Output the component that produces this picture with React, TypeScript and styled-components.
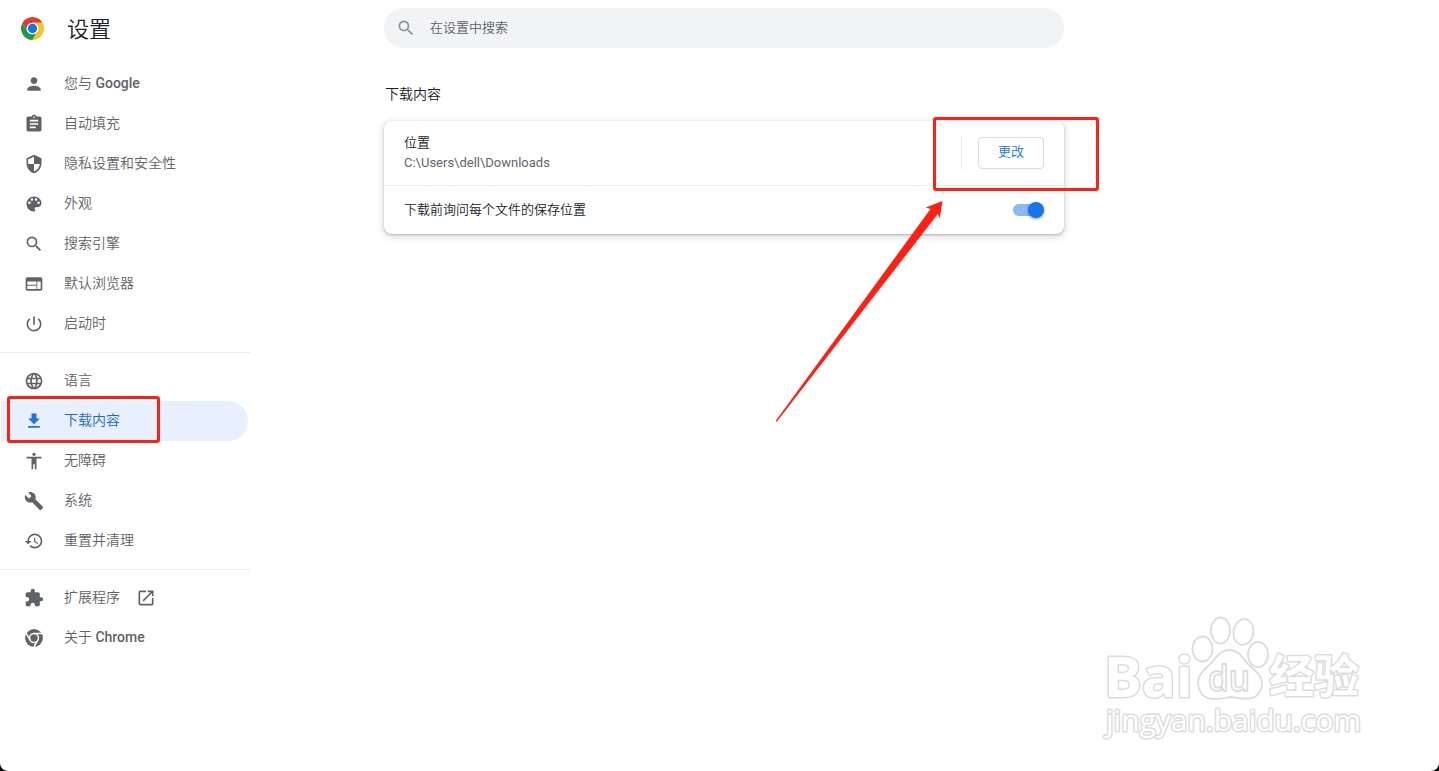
import type { ReactNode } from "react";
import styled, { createGlobalStyle } from "styled-components";
import {
  MdAccessibility,
  MdAssignment,
  MdBuild,
  MdExtension,
  MdHistory,
  MdLanguage,
  MdOpenInNew,
  MdPerson,
  MdPowerSettingsNew,
  MdSearch,
  MdSecurity,
  MdWeb,
} from "react-icons/md";

type MenuEntry = {
  label: ReactNode;
  icon: ReactNode;
  active?: boolean;
  external?: boolean;
};

const PaletteIcon = () => (
  <svg viewBox="0 0 24 24" fill="currentColor">
    <path d="M12 3c-4.97 0-9 4.03-9 9s4.03 9 9 9c.83 0 1.5-.67 1.5-1.5 0-.39-.15-.74-.39-1.01-.23-.26-.38-.61-.38-.99 0-.83.67-1.5 1.5-1.5H16c2.76 0 5-2.24 5-5 0-4.42-4.03-8-9-8zm-5.5 9c-.83 0-1.5-.67-1.5-1.5S5.67 9 6.5 9 8 9.67 8 10.5 7.33 12 6.5 12zm3-4C8.67 8 8 7.33 8 6.5S8.67 5 9.5 5s1.5.67 1.5 1.5S10.33 8 9.5 8zm5 0c-.83 0-1.5-.67-1.5-1.5S13.67 5 14.5 5s1.5.67 1.5 1.5S15.33 8 14.5 8zm3 4c-.83 0-1.5-.67-1.5-1.5S16.67 9 17.5 9s1.5.67 1.5 1.5-.67 1.5-1.5 1.5z" />
  </svg>
);

const DownloadIcon = () => (
  <svg viewBox="0 0 24 24" fill="currentColor">
    <path d="M19 9h-4V3H9v6H5l7 7 7-7zM5 18v2h14v-2H5z" />
  </svg>
);

const ChromeIcon = () => (
  <svg viewBox="-27 -27 54 54">
    <circle r="24" fill="#5f6368" />
    <circle r="12" fill="none" stroke="#fff" strokeWidth="4" />
    <g stroke="#fff" strokeWidth="4">
      <path d="M0-12H24" />
      <path d="M0-12H24" transform="rotate(120)" />
      <path d="M0-12H24" transform="rotate(240)" />
    </g>
  </svg>
);

const ChromeLogo = () => (
  <svg width="23" height="23" viewBox="0 0 48 48">
    <path fill="#e33b2e" d="M44.78 12A24 24 0 0 0 3.22 12L13.6 30A12 12 0 0 1 24 12Z" />
    <path fill="#219a48" d="M3.22 12A24 24 0 0 0 24 48L34.4 30A12 12 0 0 1 13.6 30Z" />
    <path fill="#fcc31e" d="M24 48A24 24 0 0 0 44.78 12H24A12 12 0 0 1 34.4 30Z" />
    <circle cx="24" cy="24" r="12" fill="#fff" />
    <circle cx="24" cy="24" r="9.7" fill="#1a73e8" />
  </svg>
);

const groups: MenuEntry[][] = [
  [
    { label: <>您与 <b>Google</b></>, icon: <MdPerson /> },
    { label: "自动填充", icon: <MdAssignment /> },
    { label: "隐私设置和安全性", icon: <MdSecurity /> },
    { label: "外观", icon: <PaletteIcon /> },
    { label: "搜索引擎", icon: <MdSearch /> },
    { label: "默认浏览器", icon: <MdWeb /> },
    { label: "启动时", icon: <MdPowerSettingsNew /> },
  ],
  [
    { label: "语言", icon: <MdLanguage /> },
    { label: "下载内容", icon: <DownloadIcon />, active: true },
    { label: "无障碍", icon: <MdAccessibility /> },
    { label: "系统", icon: <MdBuild /> },
    { label: "重置并清理", icon: <MdHistory /> },
  ],
  [
    { label: "扩展程序", icon: <MdExtension />, external: true },
    { label: <>关于 <b>Chrome</b></>, icon: <ChromeIcon /> },
  ],
];

function App() {
  return (
    <>
      <GlobalStyle />
      <StyledWindow>
        <StyledSidebar>
          <StyledBrand>
            <ChromeLogo />
            <h1>设置</h1>
          </StyledBrand>
          {groups.map((group, i) => (
            <StyledGroup key={i}>
              {group.map((entry, j) => (
                <StyledItem key={j} $active={entry.active}>
                  {entry.icon}
                  <span>{entry.label}</span>
                  {entry.external && <MdOpenInNew />}
                </StyledItem>
              ))}
            </StyledGroup>
          ))}
        </StyledSidebar>

        <StyledMain>
          <StyledSearch>
            <MdSearch />
            <span>在设置中搜索</span>
          </StyledSearch>
          <StyledHeading>下载内容</StyledHeading>
          <StyledCard>
            <StyledRow $height={64}>
              <StyledText>
                <div>位置</div>
                <small>C:\Users\dell\Downloads</small>
              </StyledText>
              <StyledAction>
                <StyledButton>更改</StyledButton>
              </StyledAction>
            </StyledRow>
            <StyledRow $height={49}>
              <StyledText>
                <div>下载前询问每个文件的保存位置</div>
              </StyledText>
              <StyledToggle />
            </StyledRow>
          </StyledCard>
        </StyledMain>

        <StyledMark $x={7} $y={396} $w={153} $h={47} />
        <StyledMark $x={933} $y={117} $w={166} $h={74} />
        <StyledArrow width="180" height="230" viewBox="770 195 180 230">
          <path
            fill="#ff2013"
            d="M942.5 201L925.8 207.4L930.5 209L775.8 420.8L776.8 421.8L937.8 214L939.8 218.2Z"
          />
        </StyledArrow>
        <Watermark />
      </StyledWindow>
    </>
  );
}

const Watermark = () => (
  <StyledWatermark width="280" height="140" viewBox="1095 610 280 140">
    <g fill="#fff" stroke="#dcdcdc" strokeWidth="1.8" strokeLinejoin="round">
      <text x="1104" y="697" fontSize="56" fontWeight="700" textLength="89" lengthAdjust="spacingAndGlyphs" paintOrder="stroke" strokeWidth="3">
        Bai
      </text>
      <ellipse cx="1202.5" cy="649" rx="10" ry="12.5" />
      <ellipse cx="1220.5" cy="630.5" rx="9.5" ry="13" />
      <ellipse cx="1243.5" cy="632" rx="10" ry="13" transform="rotate(8 1243.5 632)" />
      <ellipse cx="1258" cy="654.5" rx="10" ry="12.5" />
      <path d="M1229 650C1218 650 1216 660 1207 667C1198 675 1196 682 1200 691C1205 702 1218 699 1230 697C1242 698 1256 703 1261 689C1265 678 1257 672 1249 665C1242 658 1240 650 1229 650Z" />
      <text x="1208" y="691" fontSize="36" fontWeight="600" textLength="42" lengthAdjust="spacingAndGlyphs">
        du
      </text>
      <text x="1269" y="693" fontSize="45" fontWeight="700" textLength="90" lengthAdjust="spacingAndGlyphs" paintOrder="stroke" strokeWidth="3">
        经验
      </text>
      <text x="1106" y="731" fontSize="29" fontWeight="400" textLength="255" lengthAdjust="spacingAndGlyphs" paintOrder="stroke" strokeWidth="3">
        jingyan.baidu.com
      </text>
    </g>
  </StyledWatermark>
);

const GlobalStyle = createGlobalStyle`
  body {
    margin: 0;
    background: #000;
    font-family: Roboto, "Noto Sans CJK SC", sans-serif;
    font-weight: 350;
    overflow: hidden;
  }

  * {
    box-sizing: border-box;
  }
`;

const StyledWindow = styled.div`
  position: relative;
  display: flex;
  width: 1439px;
  height: 771px;
  background: #fff;
  border-radius: 0 0 8px 8px;
  overflow: hidden;
`;

const StyledSidebar = styled.nav`
  width: 250px;
  flex: none;
`;

const StyledBrand = styled.header`
  display: flex;
  align-items: center;
  gap: 23px;
  height: 64px;
  padding: 0 0 8px 21px;

  h1 {
    margin: 4px 0 0;
    font-size: 22px;
    line-height: 30px;
    font-weight: 350;
    color: #202124;
  }
`;

const StyledGroup = styled.div`
  & + & {
    margin-top: 8px;
    padding-top: 8px;
    border-top: 1px solid #e8eaed;
  }
`;

const StyledItem = styled.div<{ $active?: boolean }>`
  display: flex;
  align-items: center;
  width: 247px;
  height: 40px;
  margin-left: 1px;
  padding-left: 23px;
  border-radius: 0 20px 20px 0;
  font-size: 14px;
  line-height: 20px;
  color: ${({ $active }) => ($active ? "#1967d2" : "#5f6368")};
  background: ${({ $active }) => ($active ? "#e8f0fe" : "transparent")};

  svg {
    width: 20px;
    height: 20px;
    color: ${({ $active }) => ($active ? "#1a73e8" : "#5f6368")};
  }

  span {
    margin: 0 16px 2px 20px;
  }

  b {
    font-weight: 500;
  }
`;

const StyledMain = styled.main`
  width: 680px;
  margin-left: 134px;
  padding-top: 8px;
`;

const StyledSearch = styled.div`
  display: flex;
  align-items: center;
  gap: 14px;
  height: 40px;
  padding-left: 12px;
  border-radius: 20px;
  background: #f1f3f4;
  font-size: 13px;
  line-height: 20px;
  color: #5f6368;

  svg {
    width: 20px;
    height: 20px;
    color: #8f9193;
  }

  span {
    margin-bottom: 1px;
  }
`;

const StyledHeading = styled.h2`
  margin: 36px 0 17px 1px;
  font-size: 14px;
  line-height: 20px;
  font-weight: 350;
  color: #202124;
`;

const StyledCard = styled.section`
  border-radius: 8px;
  box-shadow:
    0 1px 2px 0 rgba(60, 64, 67, 0.3),
    0 2px 6px 2px rgba(60, 64, 67, 0.15);
`;

const StyledRow = styled.div<{ $height: number }>`
  display: flex;
  align-items: center;
  justify-content: space-between;
  height: ${({ $height }) => $height}px;
  padding: 0 20px;

  & + & {
    border-top: 1px solid #e8eaed;
  }
`;

const StyledText = styled.div`
  font-size: 13px;
  line-height: 20px;
  color: #202124;

  small {
    display: block;
    font-size: 13px;
    font-weight: 400;
    color: #5f6368;
  }
`;

const StyledAction = styled.div`
  display: flex;
  height: 32px;
  padding-left: 16px;
  border-left: 1px solid #e8eaed;
`;

const StyledButton = styled.button`
  width: 66px;
  height: 32px;
  padding: 0 0 2px;
  border: 1px solid #dadce0;
  border-radius: 4px;
  background: #fff;
  font: 350 13px/20px Roboto, "Noto Sans CJK SC", sans-serif;
  color: #1a73e8;
`;

const StyledToggle = styled.div`
  display: flex;
  align-items: center;
  justify-content: flex-end;
  width: 31px;
  height: 12px;
  border-radius: 6px;
  background: linear-gradient(90deg, #8cb8f4 26px, transparent 26px);

  &::after {
    content: "";
    width: 16px;
    height: 16px;
    border-radius: 50%;
    background: #1a73e8;
    box-shadow: 0 1px 3px rgba(0, 0, 0, 0.4);
  }
`;

const StyledMark = styled.div<{ $x: number; $y: number; $w: number; $h: number }>`
  position: absolute;
  left: ${({ $x }) => $x}px;
  top: ${({ $y }) => $y}px;
  width: ${({ $w }) => $w}px;
  height: ${({ $h }) => $h}px;
  border: 3px solid #ff2013;
  border-radius: 3px;
`;

const StyledArrow = styled.svg`
  position: absolute;
  left: 770px;
  top: 195px;
`;

const StyledWatermark = styled.svg`
  position: absolute;
  left: 1095px;
  top: 610px;
  font-family: "Open Sans", "Noto Sans CJK SC", sans-serif;
`;

export default App;
